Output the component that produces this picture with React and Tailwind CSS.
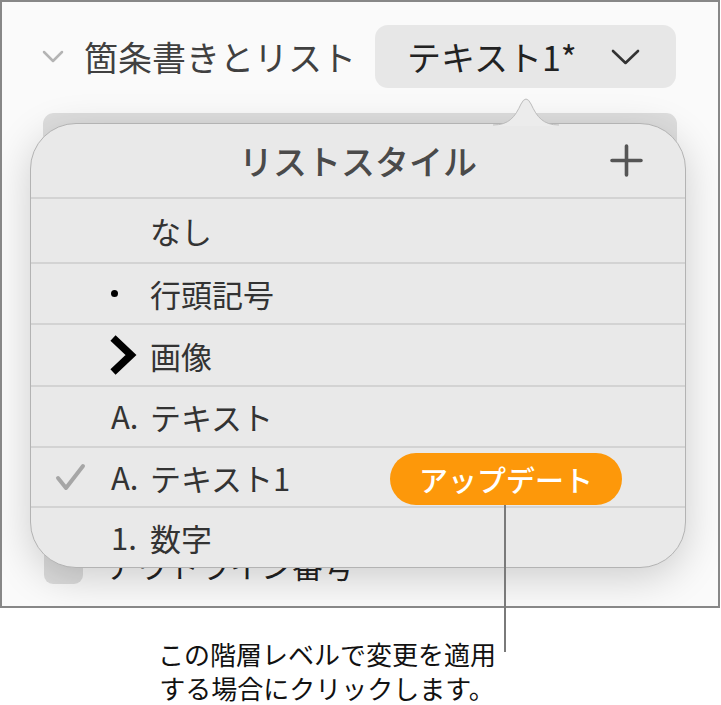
import React from "react";

const FONT = "font-['Noto_Sans_CJK_JP','Noto_Sans',sans-serif]";

function Check() {
  return (
    <svg width="32" height="28" viewBox="0 0 32 28" fill="none">
      <polyline
        points="3,15 11,25 28,3"
        stroke="#a6a6a6"
        strokeWidth="4"
        strokeLinecap="round"
        strokeLinejoin="round"
      />
    </svg>
  );
}

function Row({ check, marker, label, children, h }) {
  return (
    <div className={`flex items-center pl-[24px] border-t-2 border-[#d3d3d3] ${h}`}>
      <div className="w-[32px] flex items-center">{check && <Check />}</div>
      <div className="w-[63px] pl-[24px] flex items-center text-[31px] text-[#333]">
        {marker}
      </div>
      <span className="text-[31px] text-[#333] leading-none">{label}</span>
      {children}
    </div>
  );
}

export default function App() {
  return (
    <div className={`relative w-[721px] h-[705px] bg-white ${FONT}`}>
      {/* 画面の枠 */}
      <div className="relative w-[720px] h-[608px] border-2 border-[#878787] bg-[#fafafa] overflow-hidden">
        {/* 見出し行 */}
        <div className="flex items-center pt-[23px]">
          <svg className="ml-[40px]" width="22" height="13" viewBox="0 0 22 13" fill="none">
            <polyline
              points="2,2 11,11 20,2"
              stroke="#b4b4b4"
              strokeWidth="2.5"
              strokeLinecap="round"
              strokeLinejoin="round"
            />
          </svg>
          <span className="ml-[20px] text-[34px] text-[#404040] leading-none">
            箇条書きとリスト
          </span>
          <div className="ml-auto mr-[42px] w-[301px] h-[63px] rounded-[13px] bg-[#e7e7e7] flex items-center">
            <span className="pl-[32px] text-[34px] text-[#222] leading-none">テキスト1*</span>
            <svg className="ml-auto mr-[36px]" width="29" height="16" viewBox="0 0 29 16" fill="none">
              <polyline
                points="2,2 14.5,14 27,2"
                stroke="#333"
                strokeWidth="2.6"
                strokeLinecap="round"
                strokeLinejoin="round"
              />
            </svg>
          </div>
        </div>

        {/* 下にあるパネル */}
        <div className="ml-[41px] mt-[25px] w-[634px] h-[40px] rounded-[11px] bg-[#dedede]" />
        <div className="flex items-center mt-[392px]">
          <div className="ml-[42px] w-[39px] h-[39px] rounded-[9px] bg-[#dcdcdc]" />
          <span className="ml-[23px] text-[31px] text-[#222] leading-none">アウトライン番号</span>
        </div>

        {/* ポップオーバー */}
        <div className="absolute left-[28px] top-[121px] w-[656px] h-[445px] rounded-[46px] bg-[#e9e9e9] border border-[#b3b3b3] shadow-[0_10px_40px_rgba(0,0,0,0.18)]">
          <svg
            className="absolute left-[462px] top-[-29px]"
            width="66"
            height="31"
            viewBox="0 0 66 31"
            fill="none"
          >
            <path
              d="M0 30 C 16 30 22 22 28 9 Q 33 -1 38 9 C 44 22 50 30 66 30 L 66 31 L 0 31 Z"
              fill="#ececec"
            />
            <path
              d="M0 30 C 16 30 22 22 28 9 Q 33 -1 38 9 C 44 22 50 30 66 30"
              stroke="#bcbcbc"
              strokeWidth="1"
            />
          </svg>
          <div className="grid grid-cols-[1fr_auto_1fr] items-center h-[73px]">
            <div />
            <span className="text-[34px] font-medium text-[#4a4a4a] leading-none">
              リストスタイル
            </span>
            <svg className="justify-self-end mr-[42px]" width="33" height="33" viewBox="0 0 33 33" fill="none">
              <path d="M16.5 2 V31 M2 16.5 H31" stroke="#555" strokeWidth="3.6" strokeLinecap="round" />
            </svg>
          </div>
          <Row h="h-[65px]" label="なし" />
          <Row
            h="h-[61px]"
            marker={<span className="block w-[7px] h-[7px] rounded-full bg-black" />}
            label="行頭記号"
          />
          <Row
            h="h-[62px]"
            marker={
              <svg className="-ml-[3px]" width="30" height="42" viewBox="0 0 30 42" fill="none">
                <polyline points="5,4 23,21 5,38" stroke="#000" strokeWidth="7.5" strokeLinejoin="miter" />
              </svg>
            }
            label="画像"
          />
          <Row h="h-[61px]" marker="A." label="テキスト" />
          <Row h="h-[60px]" check marker="A." label="テキスト1">
            <div className="ml-auto mr-[63px] mt-[4px] w-[232px] h-[52px] rounded-full bg-[#fd980a] flex items-center justify-center">
              <span className="text-[29px] font-medium text-white leading-none">アップデート</span>
            </div>
          </Row>
          <Row h="h-[61px]" marker="1." label="数字" />
        </div>
      </div>

      {/* 引き出し線 */}
      <div className="absolute left-[504px] top-[505px] w-[2px] h-[147px] bg-[#7a7a7a]" />

      {/* 説明文 */}
      <div className="w-[654px] mt-[29px] text-center text-[26px] leading-[34px] text-[#111]">
        <p>この階層レベルで変更を適用</p>
        <p>する場合にクリックします。</p>
      </div>
    </div>
  );
}
